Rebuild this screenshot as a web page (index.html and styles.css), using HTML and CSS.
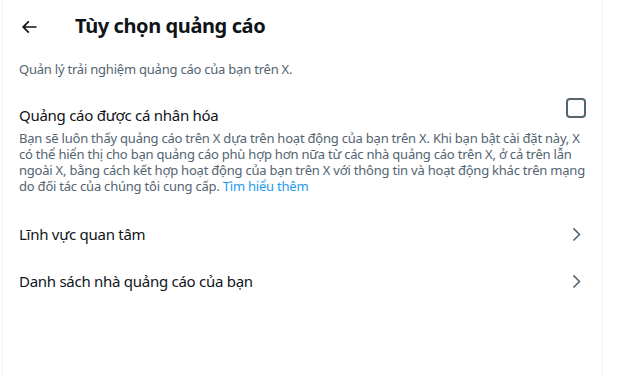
FILE: index.html
```html
<!DOCTYPE html>
<html lang="vi">
<head>
<meta charset="utf-8">
<title>Tùy chọn quảng cáo</title>
<link rel="stylesheet" href="styles.css">
</head>
<body>
<main class="panel">
  <header class="header">
    <div class="back">
      <svg viewBox="0 0 24 24" width="20" height="20"><path d="M7.414 13l5.043 5.04-1.414 1.42L3.586 12l7.457-7.46 1.414 1.42L7.414 11H21v2H7.414z"/></svg>
    </div>
    <h1 class="title">Tùy chọn quảng cáo</h1>
  </header>
  <p class="intro">Quản lý trải nghiệm quảng cáo của bạn trên X.</p>
  <section class="setting">
    <div class="setting-row">
      <span class="setting-label">Quảng cáo được cá nhân hóa</span>
      <span class="checkbox"></span>
    </div>
    <p class="setting-desc">Bạn sẽ luôn thấy quảng cáo trên X dựa trên hoạt động của bạn trên X. Khi bạn bật cài đặt này, X có thể hiển thị cho bạn quảng cáo phù hợp hơn nữa từ các nhà quảng cáo trên X, ở cả trên lẫn ngoài X, bằng cách kết hợp hoạt động của bạn trên X với thông tin và hoạt động khác trên mạng do đối tác của chúng tôi cung cấp. <a class="link" href="#">Tìm hiểu thêm</a></p>
  </section>
  <a class="nav-row" href="#">
    <span>Lĩnh vực quan tâm</span>
    <svg viewBox="0 0 24 24" width="18.75" height="18.75"><path d="M14.586 12L7.543 4.96l1.414-1.42L17.414 12l-8.457 8.46-1.414-1.42L14.586 12z"/></svg>
  </a>
  <a class="nav-row" href="#">
    <span>Danh sách nhà quảng cáo của bạn</span>
    <svg viewBox="0 0 24 24" width="18.75" height="18.75"><path d="M14.586 12L7.543 4.96l1.414-1.42L17.414 12l-8.457 8.46-1.414-1.42L14.586 12z"/></svg>
  </a>
</main>
</body>
</html>
```

FILE: styles.css
```css
* { box-sizing: border-box; }
html, body { margin: 0; padding: 0; background: #fff; }
body {
  font-family: "Noto Sans", "Open Sans", sans-serif;
  color: #0f1419;
}
.panel {
  margin-left: 2px;
  width: 601px;
  min-height: 375px;
  border-left: 1px solid #eff3f4;
  border-right: 1px solid #eff3f4;
}
.header {
  height: 53px;
  display: flex;
  align-items: center;
  padding: 0 16px 2px;
}
.back {
  width: 56px;
  display: flex;
  align-items: center;
  padding-top: 2px;
}
.back svg { fill: #0f1419; display: block; }
.title {
  margin: 0;
  font-size: 20px;
  font-weight: 700;
  line-height: 24px;
  letter-spacing: -0.4px;
}
.intro {
  margin: 0;
  padding: 8px 16px 12px;
  font-size: 13px;
  line-height: 16px;
  letter-spacing: -0.22px;
  color: #536471;
}
.setting {
  padding: 9px 16px 17px;
}
.setting-row {
  display: flex;
  justify-content: space-between;
  align-items: flex-start;
}
.setting-label {
  padding-top: 7px;
  font-size: 15px;
  line-height: 20px;
  letter-spacing: -0.27px;
}
.checkbox {
  width: 20px;
  height: 20px;
  border: 2px solid #536471;
  border-radius: 4px;
}
.setting-desc {
  margin: 5px 0 0;
  font-size: 13px;
  line-height: 16px;
  letter-spacing: -0.22px;
  color: #536471;
}
.link { color: #1d9bf0; text-decoration: none; }
.nav-row {
  display: flex;
  justify-content: space-between;
  align-items: center;
  padding: 13px 16px 14px;
  font-size: 15px;
  line-height: 20px;
  letter-spacing: -0.27px;
  color: #0f1419;
  text-decoration: none;
}
.nav-row svg { fill: #536471; display: block; }
```
